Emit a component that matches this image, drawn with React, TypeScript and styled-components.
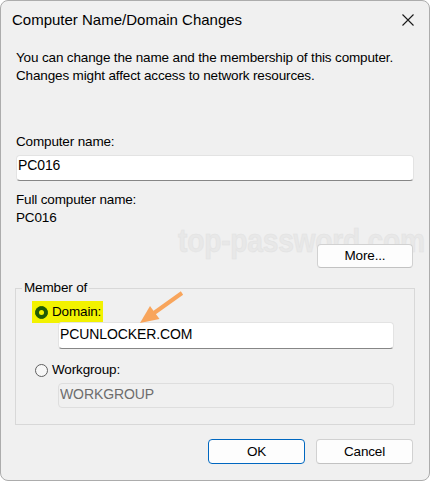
import React from "react";
import styled, { createGlobalStyle } from "styled-components";

const Global = createGlobalStyle`
  html, body { margin: 0; padding: 0; background: #ffffff; }
  body { font-family: "Liberation Sans", Arial, sans-serif; }
`;

const Window = styled.div`
  position: relative;
  box-sizing: border-box;
  width: 430px;
  height: 481px;
  border: 1px solid #acacac;
  border-radius: 8px;
  background: #f0f0f0;
  overflow: hidden;
  display: flex;
  flex-direction: column;
  font-size: 13.5px;
  letter-spacing: -0.15px;
  color: #000;
`;

const TitleBar = styled.div`
  height: 37px;
  display: flex;
  align-items: center;
  justify-content: space-between;
  padding: 0 15px 0 11px;
`;

const Title = styled.div`
  font-size: 15px;
  letter-spacing: 0;
  line-height: 18px;
`;

const Body = styled.div`
  position: relative;
  z-index: 1;
  display: flex;
  flex-direction: column;
  padding: 0 15px;
`;

const Text = styled.div<{ $mt?: number }>`
  line-height: 18px;
  white-space: nowrap;
  margin-top: ${(p) => p.$mt ?? 0}px;
`;

const Field = styled.input<{ $mt?: number; $h?: number; $pt?: number }>`
  box-sizing: border-box;
  height: ${(p) => p.$h ?? 26}px;
  margin: ${(p) => p.$mt ?? 0}px 0 0 0;
  padding: ${(p) => p.$pt ?? 0}px 1px ${(p) => (p.$h ?? 26) - 2 - 18 - (p.$pt ?? 0)}px 1px;
  font: inherit;
  font-size: 14px;
  letter-spacing: -0.1px;
  line-height: 18px;
  color: #000;
  background: #ffffff;
  border: 1px solid #e3e3e3;
  border-bottom: 1px solid #868686;
  border-radius: 4px;
  outline: none;
  &:disabled {
    background: #f0f0f0;
    border: 1px solid #dedede;
    color: #6d6d6d;
  }
`;

const Button = styled.button<{ $primary?: boolean; $h?: number }>`
  box-sizing: border-box;
  width: ${(p) => (p.$primary !== undefined ? 97 : 96)}px;
  height: ${(p) => p.$h ?? 25}px;
  font: inherit;
  letter-spacing: inherit;
  color: #000;
  background: #fdfdfd;
  border: 1px solid ${(p) => (p.$primary ? "#0067c0" : "#d1d1d1")};
  border-bottom-color: ${(p) => (p.$primary ? "#0067c0" : "#c2c2c2")};
  border-radius: 4px;
  padding: 0;
  line-height: 18px;
`;

const MoreRow = styled.div`
  display: flex;
  justify-content: flex-end;
  margin: 17px 1px 0 0;
`;

const Group = styled.fieldset`
  margin: 11px -1px 0 -1px;
  padding: 4px 0 16px 0;
  border: 1px solid #d8d8d8;
  border-radius: 0;
  display: flex;
  flex-direction: column;
  min-width: 0;
`;

const Legend = styled.legend`
  margin-left: 6px;
  padding: 0 2px;
  line-height: 18px;
`;

const RadioRow = styled.label<{ $mt?: number; $hl?: boolean }>`
  align-self: flex-start;
  display: flex;
  align-items: center;
  gap: 4px;
  height: 22px;
  margin: ${(p) => p.$mt ?? 0}px 0 0 16px;
  padding: 0 2px 0 3px;
  background: ${(p) => (p.$hl ? "#f2f200" : "transparent")};
  line-height: 18px;
`;

const Radio = styled.span<{ $on?: boolean }>`
  box-sizing: border-box;
  width: 13px;
  height: 13px;
  border-radius: 50%;
  display: flex;
  align-items: center;
  justify-content: center;
  border: 1px solid ${(p) => (p.$on ? "#1e5a06" : "#5f5f5f")};
  background: ${(p) => (p.$on ? "#1e5a06" : "#f7f7f7")};
  &::after {
    content: "";
    display: ${(p) => (p.$on ? "block" : "none")};
    width: 5px;
    height: 5px;
    border-radius: 50%;
    background: #f2f200;
  }
`;

const Indented = styled.div`
  display: flex;
  flex-direction: column;
  margin: 0 20px 0 42px;
`;

const Footer = styled.div`
  display: flex;
  justify-content: flex-end;
  gap: 11px;
  margin: 14px 1px 0 0;
`;

const Watermark = styled.div`
  position: absolute;
  z-index: 0;
  left: 177px;
  top: 222px;
  font-family: "Liberation Sans", Arial, sans-serif;
  font-weight: bold;
  font-size: 34px;
  line-height: 34px;
  letter-spacing: -0.3px;
  color: #e8e8e8;
  -webkit-text-stroke: 0.6px #e2e2e2;
  transform: scaleX(0.83);
  transform-origin: left top;
  pointer-events: none;
  white-space: nowrap;
`;

const Overlay = styled.svg`
  position: absolute;
  z-index: 2;
  left: 0;
  top: 0;
  pointer-events: none;
`;

export default function App() {
  return (
    <>
      <Global />
      <Window>
        <TitleBar>
          <Title>Computer Name/Domain Changes</Title>
          <svg width="12" height="12" viewBox="0 0 12 12">
            <path d="M0.5 0.5 L11.5 11.5 M11.5 0.5 L0.5 11.5" stroke="#1a1a1a" strokeWidth="1.1" fill="none" />
          </svg>
        </TitleBar>
        <Body>
          <Text $mt={11}>
            You can change the name and the membership of this computer.
            <br />
            Changes might affect access to network resources.
          </Text>
          <Text $mt={48}>Computer name:</Text>
          <Field $mt={4} defaultValue="PC016" />
          <Text $mt={10}>Full computer name:</Text>
          <Text>PC016</Text>
          <MoreRow>
            <Button $h={24}>More...</Button>
          </MoreRow>
          <Group>
            <Legend>Member of</Legend>
            <RadioRow $hl>
              <Radio $on />
              <span>Domain:</span>
            </RadioRow>
            <Indented>
              <Field $mt={-1} $h={27} $pt={2} defaultValue="PCUNLOCKER.COM" />
            </Indented>
            <RadioRow $mt={10}>
              <Radio />
              <span>Workgroup:</span>
            </RadioRow>
            <Indented>
              <Field $mt={2} $h={25} $pt={1} disabled defaultValue="WORKGROUP" />
            </Indented>
          </Group>
          <Footer>
            <Button $primary>OK</Button>
            <Button $primary={false}>Cancel</Button>
          </Footer>
        </Body>
        <Watermark>top-password.com</Watermark>
        <Overlay width="430" height="481" viewBox="0 0 430 481">
          <line x1="181" y1="292" x2="153" y2="312" stroke="#f8a55c" strokeWidth="4" />
          <polygon points="139,322 149,305 158.5,318" fill="#f8a55c" />
        </Overlay>
      </Window>
    </>
  );
}
